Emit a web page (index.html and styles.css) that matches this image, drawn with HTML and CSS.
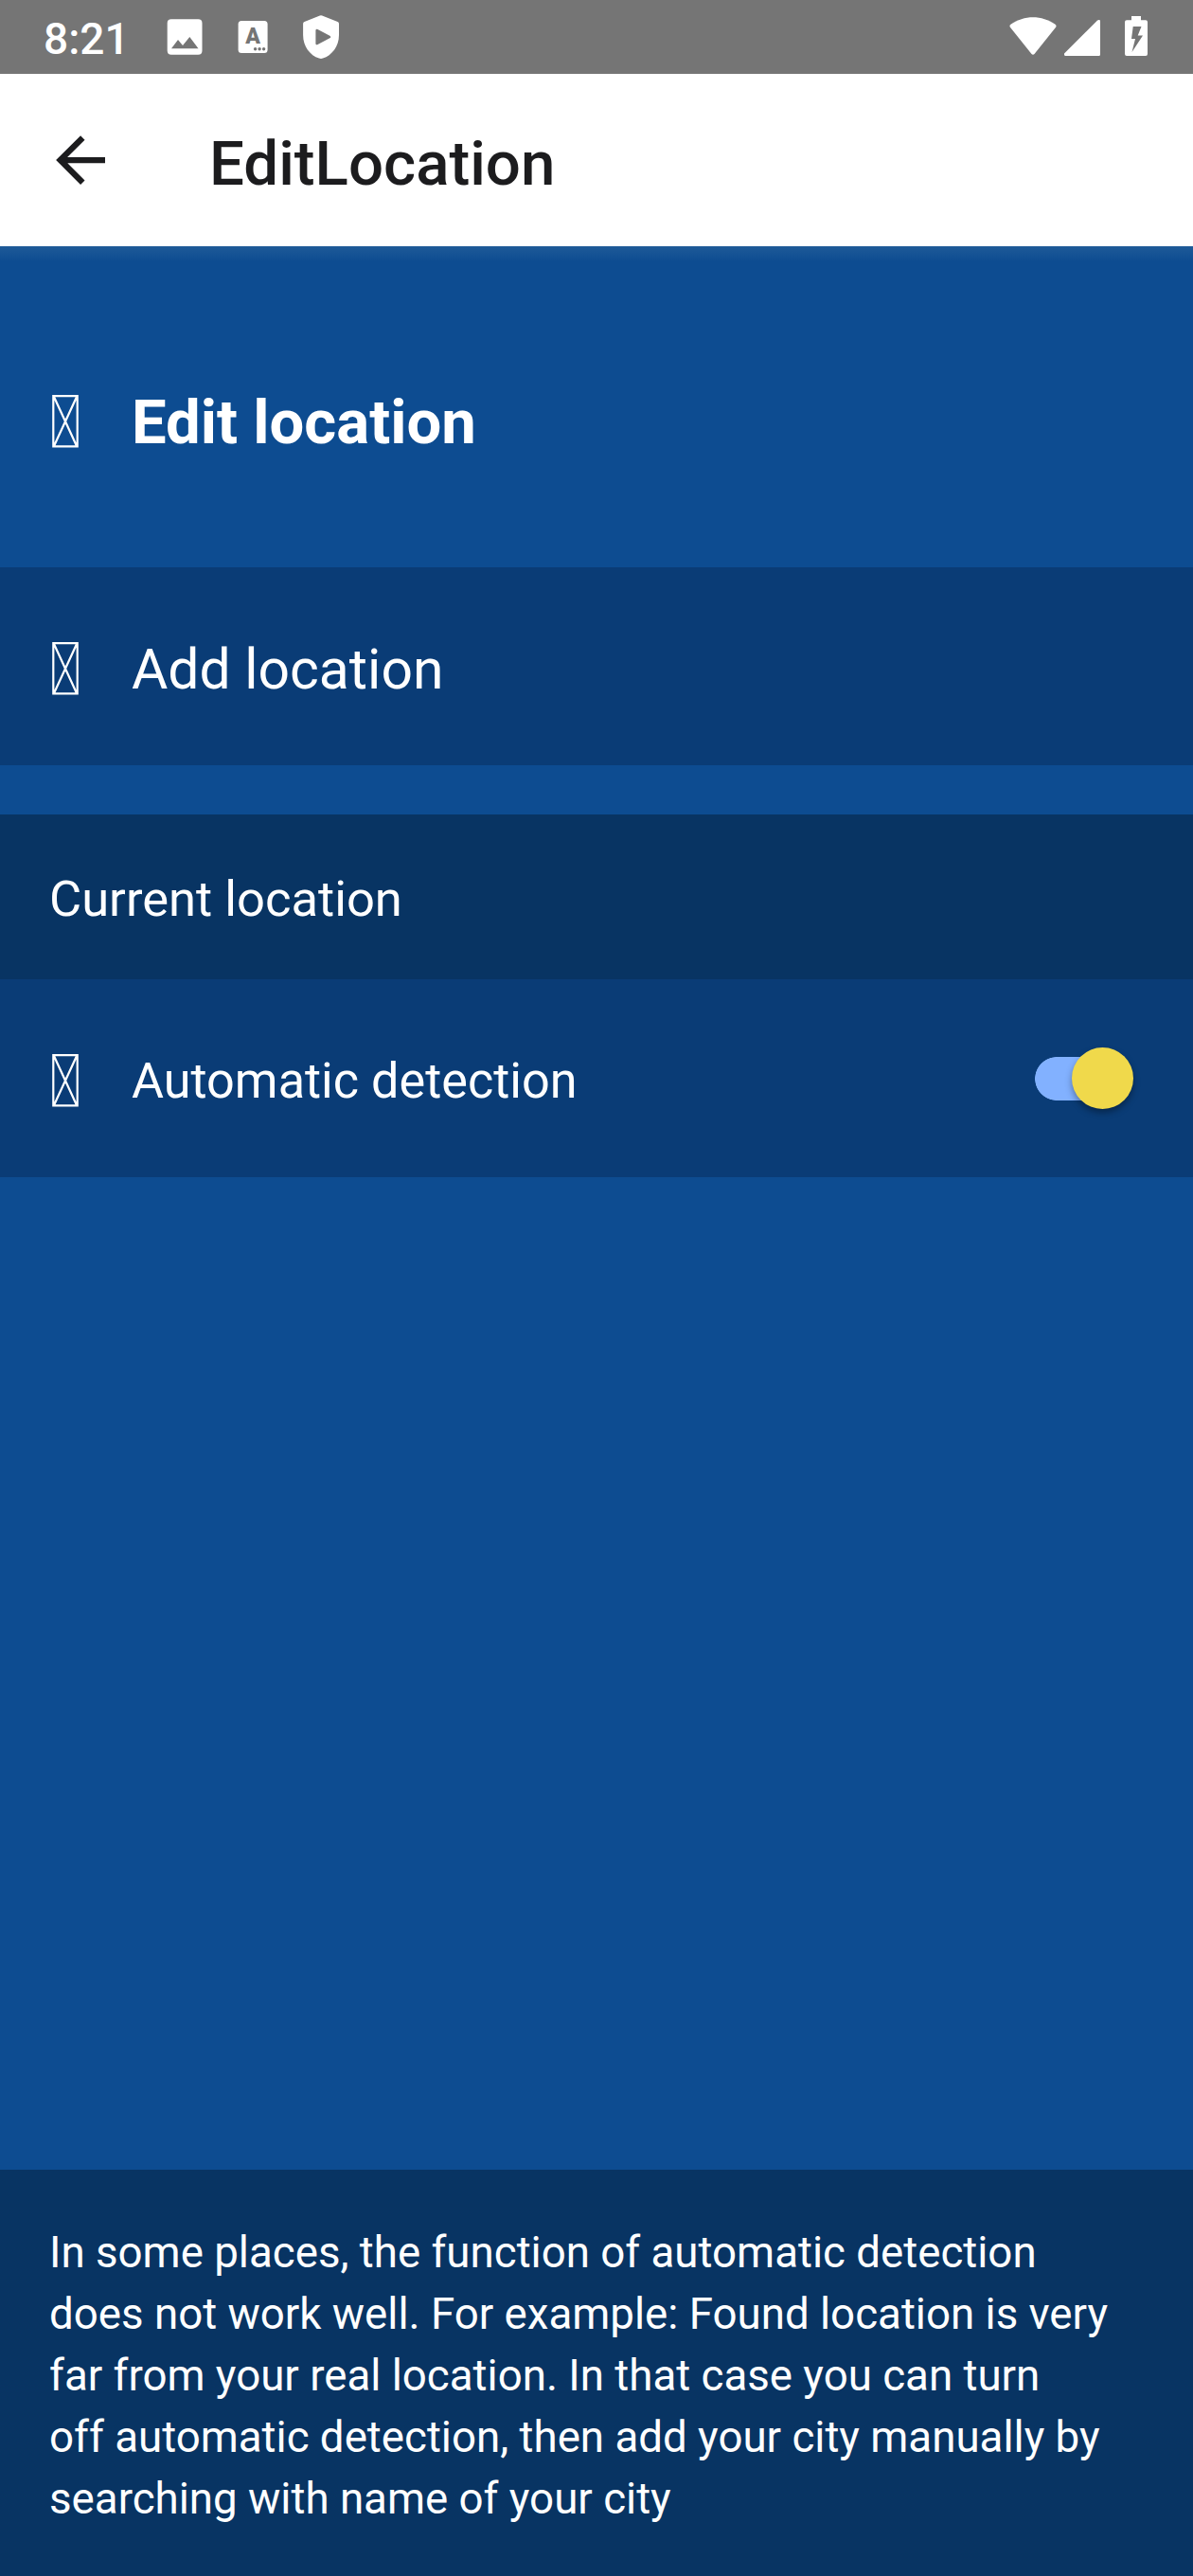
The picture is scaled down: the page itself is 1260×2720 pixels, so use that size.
FILE: index.html
```html
<!DOCTYPE html>
<html lang="en">
<head>
<meta charset="utf-8">
<title>Edit location</title>
<link rel="stylesheet" href="styles.css">
</head>
<body>
<svg class="defs" aria-hidden="true">
  <symbol id="missing-glyph" viewBox="0 0 28 56">
    <path d="M1.3 1.2H26.7V54.4H1.3ZM2 2L26 54M26 2L2 54" fill="none" stroke="#fff" stroke-width="2.2"/>
  </symbol>
</svg>
<div class="screen">
  <header class="status-bar">
    <div class="status-group">
      <span class="clock">8:21</span>
      <svg class="icon-image" width="38" height="48" viewBox="176 16 38 48"><path fill="#fff" fill-rule="evenodd" d="M181 20.3H209.3Q213.5 20.3 213.5 24.5V53.5Q213.5 57.7 209.3 57.7H181Q176.7 57.7 176.7 53.5V24.5Q176.7 20.3 181 20.3ZM181 51.2H209.5L200.3 39L193 48L188 42Z"/></svg>
      <svg class="icon-keyboard" width="32" height="48" viewBox="251 16 32 48"><rect x="251.6" y="22" width="31" height="34" rx="3.5" fill="#fff"/><text x="267" y="46" text-anchor="middle" class="badge-letter">A</text><g fill="#757575"><circle cx="269.6" cy="51.8" r="1.7"/><circle cx="274.1" cy="51.8" r="1.7"/><circle cx="278.6" cy="51.8" r="1.7"/></g></svg>
      <svg class="icon-shield" width="40" height="48" viewBox="319 16 40 48"><path fill="#fff" fill-rule="evenodd" d="M337.8 16.6Q339 16 340.2 16.6L356.6 23Q358 23.6 358 25V37C358 49 350.5 58.5 341 61.6Q339 62.2 337 61.6C327.5 58.5 320.1 49 320.1 37V25Q320.1 23.6 321.5 23ZM333.4 32.2V45.8Q333.4 48.1 335.5 47L348.3 40.3Q350.3 39 348.3 37.7L335.5 31Q333.4 29.9 333.4 32.2Z"/></svg>
    </div>
    <div class="status-group">
      <svg width="50" height="48" viewBox="1065.5 16 50 48"><path fill="#fff" d="M1066.4 28.7Q1065.3 27 1067 25.7C1081 15.7 1100 15.7 1114 25.7Q1115.7 27 1114.6 28.7L1092 57Q1090.5 58.6 1089 57Z"/></svg>
      <svg class="icon-signal" width="38" height="48" viewBox="1124 16 38 48"><path fill="#fff" d="M1158.8 21.7Q1160 20.6 1161.2 21Q1162 21.4 1162 22.5V57.5Q1162 59 1160.5 59H1125.5Q1124 59 1124 57.5V56.5Z"/></svg>
      <svg class="icon-battery" width="24" height="48" viewBox="1188 16 24 48"><path fill="#fff" fill-rule="evenodd" d="M1195 17H1205V21.2H1210Q1212 21.2 1212 23.2V57Q1212 59 1210 59H1190Q1188 59 1188 57V23.2Q1188 21.2 1190 21.2H1195ZM1196.7 28L1195 41H1199L1195.5 55L1207 37.5H1201.7L1205.5 28Z"/></svg>
    </div>
  </header>
  <nav class="app-bar">
    <svg width="54" height="54" viewBox="58 142 54 54"><path d="M111 169.1H64M87.3 145.4L63.6 169.1L87.3 192.8" fill="none" stroke="#1c1c1e" stroke-width="6.3"/></svg>
    <h1 class="app-title">EditLocation</h1>
  </nav>
  <main class="content">
    <div class="page-heading">
      <svg class="glyph"><use href="#missing-glyph"/></svg>
      <h2 class="heading-text">Edit location</h2>
    </div>
    <div class="row row-add">
      <svg class="glyph"><use href="#missing-glyph"/></svg>
      <span class="add-text">Add location</span>
    </div>
    <div class="section-title">Current location</div>
    <div class="row">
      <svg class="glyph"><use href="#missing-glyph"/></svg>
      <span class="row-text">Automatic detection</span>
      <div class="switch"><div class="thumb"></div></div>
    </div>
  </main>
  <footer class="note">In some places, the function of automatic detection<br>does not work well. For example: Found location is very<br>far from your real location. In that case you can turn<br>off automatic detection, then add your city manually by<br>searching with name of your city</footer>
</div>
</body>
</html>
```
FILE: styles.css
```css
* { box-sizing: border-box; }
body {
  margin: 0;
  font-family: Roboto, sans-serif;
  color: #fff;
}
svg { display: block; flex: none; }
h1, h2 { margin: 0; }
.defs { width: 0; height: 0; position: absolute; }

.screen {
  width: 1260px;
  height: 2720px;
  display: flex;
  flex-direction: column;
  background: #0d4c91;
  overflow: hidden;
}

.status-bar {
  height: 78px;
  flex: none;
  display: flex;
  justify-content: space-between;
  align-items: center;
  padding: 2px 48px 0 46px;
  background: #757575;
}
.status-group { display: flex; align-items: center; }
.clock {
  width: 130px;
  padding-top: 1px;
  font-size: 46px;
  font-weight: 500;
  line-height: 54px;
}
.icon-keyboard { margin-left: 37px; }
.icon-shield { margin-left: 36px; }
.icon-signal { margin-left: 8.5px; }
.icon-battery { margin-left: 26px; }
.badge-letter { font: 900 23px Roboto, sans-serif; fill: #757575; }

.app-bar {
  height: 182px;
  flex: none;
  display: flex;
  align-items: center;
  padding-left: 58px;
  background: #fff;
  color: #1c1c1e;
}
.app-title {
  margin-left: 109px;
  padding-top: 7px;
  font-size: 65.4px;
  font-weight: 500;
  line-height: 76px;
}

.content {
  flex: 1;
  background: linear-gradient(#1e5a98, #0d4c91 16px);
}
.glyph { width: 28px; height: 56px; }
.page-heading {
  height: 339px;
  display: flex;
  align-items: center;
  padding: 31px 0 0 55px;
}
.heading-text {
  margin-left: 56px;
  padding-top: 2px;
  font-size: 65.2px;
  font-weight: 700;
  line-height: 76px;
}
.row {
  height: 209px;
  display: flex;
  align-items: center;
  padding: 5px 63px 0 55px;
  background: #0a3c76;
}
.row-add { margin-bottom: 52px; }
.add-text {
  margin-left: 56px;
  padding-top: 2px;
  font-size: 58.8px;
  line-height: 68px;
}
.section-title {
  height: 174px;
  padding: 4px 52px 0;
  background: #083463;
  font-size: 52.5px;
  line-height: 170px;
}
.row-text {
  margin-left: 56px;
  padding-top: 2px;
  font-size: 52.2px;
  line-height: 62px;
}
/* Track is painted behind the thumb, with a rounded left end only. */
.switch {
  width: 104px;
  height: 66px;
  margin: -5px 0 0 auto;
  padding-right: 0.5px;
  display: flex;
  align-items: center;
  justify-content: flex-end;
  background:
    radial-gradient(circle 23px at 23px 33px, #82b1ff 22.5px, transparent 23.2px),
    linear-gradient(#82b1ff, #82b1ff) 23px 10px / 50px 46px no-repeat;
}
.thumb {
  width: 65px;
  height: 65px;
  border-radius: 50%;
  background: #f0d94b;
  box-shadow: 0 4px 7px rgba(0, 0, 0, 0.35);
}

.note {
  height: 429px;
  flex: none;
  padding: 55px 52px 0;
  background: #083463;
  font-size: 45.68px;
  line-height: 65px;
  white-space: nowrap;
}
```
